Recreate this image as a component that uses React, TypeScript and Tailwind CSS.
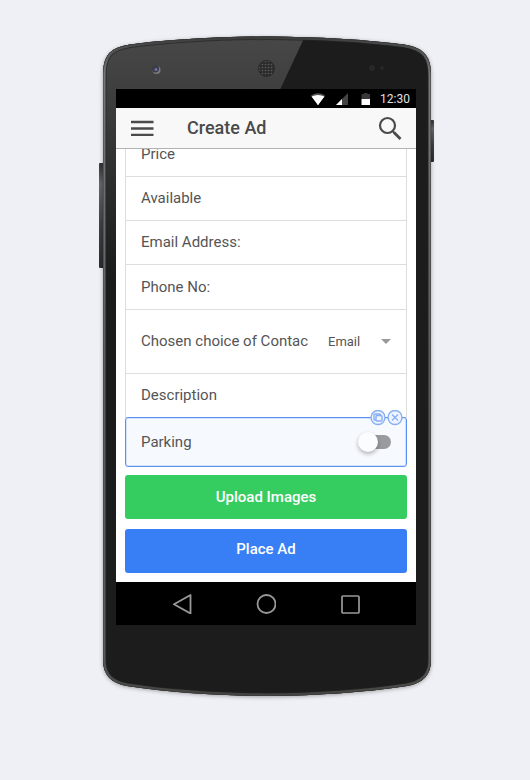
import { useState } from "react";

const fields = [
  { id: "price", label: "Price", type: "text", height: "h-11" },
  { id: "available", label: "Available", type: "text", height: "h-11" },
  { id: "email", label: "Email Address:", type: "email", height: "h-11" },
  { id: "phone", label: "Phone No:", type: "tel", height: "h-[45px]" },
];

function PhoneBody() {
  const outline =
    "M103 76 C103 56 109 48 130 44.500 Q190 37 267 36.500 Q344 37 404 44.500 C425 48 431 57 431 76 V660 C431 675 423 683 407 686 Q344 695.500 267 696 Q190 695.500 127 686 C111 683 103 675 103 660 Z";
  return (
    <svg
      aria-hidden="true"
      className="pointer-events-none absolute top-0 left-0 h-[670px] w-[340px]"
      viewBox="98 34 340 670"
    >
      <defs>
        <linearGradient id="shine" x1="0" y1="0" x2="0" y2="1">
          <stop offset="0" stopColor="#484848" />
          <stop offset="0.18" stopColor="#3c3c3c" />
          <stop offset="0.6" stopColor="#1b1b1b" />
        </linearGradient>
        <linearGradient id="rim" x1="0" y1="0" x2="0" y2="1">
          <stop offset="0" stopColor="#3c3c3c" />
          <stop offset="0.06" stopColor="#77787b" />
          <stop offset="0.5" stopColor="#5b5c5e" />
          <stop offset="0.94" stopColor="#58595b" />
          <stop offset="1" stopColor="#444340" />
        </linearGradient>
        <linearGradient id="key" x1="0" y1="0" x2="0" y2="1">
          <stop offset="0" stopColor="#333" />
          <stop offset="0.2" stopColor="#66676a" />
          <stop offset="0.6" stopColor="#3f4042" />
          <stop offset="1" stopColor="#2c2c2e" />
        </linearGradient>
        <filter id="shade" x="-10%" y="-10%" width="120%" height="120%">
          <feDropShadow dx="0" dy="1" stdDeviation="2" floodColor="#000" floodOpacity="0.35" />
        </filter>
        <clipPath id="body">
          <path d={outline} />
        </clipPath>
        <pattern id="mesh" width="3" height="3" patternUnits="userSpaceOnUse">
          <rect width="3" height="3" fill="#2c2c2c" />
          <circle cx="1.5" cy="1.5" r="0.8" fill="#5c5c5c" />
        </pattern>
      </defs>
      <rect x="99" y="163" width="5" height="105" rx="1" fill="url(#key)" />
      <rect x="430" y="120" width="4" height="42" rx="1" fill="url(#key)" />
      <path d={outline} fill="#1a1a1a" filter="url(#shade)" />
      <g clipPath="url(#body)">
        <path d="M98 34 H306 L278 94 L116 440 H98 Z" fill="url(#shine)" />
        <path d={outline} fill="none" stroke="#232323" strokeOpacity="0.7" strokeWidth="7" />
        <path d={outline} fill="none" stroke="url(#rim)" strokeWidth="5" />
        <path d={outline} fill="none" stroke="#3b3b3c" strokeWidth="1" />
      </g>
      <circle cx="156.500" cy="70" r="4" fill="#7c7d84" />
      <circle cx="155.500" cy="68.800" r="3.600" fill="#3c3c44" />
      <circle cx="156" cy="69.500" r="1.500" fill="#6f70b5" />
      <circle cx="266.500" cy="68.500" r="8" fill="url(#mesh)" stroke="#2a2a2a" />
      <circle cx="372" cy="68" r="3" fill="#282828" />
      <circle cx="382" cy="68" r="2" fill="#282828" />
    </svg>
  );
}

function StatusBar() {
  return (
    <div className="flex h-[19px] items-center justify-end bg-black pr-1.5 text-xs text-[#e0e0e0]">
      <svg aria-hidden="true" className="h-3 w-[70px]" viewBox="0 0 70 12">
        <path d="M5 2.500 Q12 -2 19 2.500 L12 12 Z" fill="#555" />
        <path d="M7 4.500 Q12 2 17 4.500 L12 12 Z" fill="#fff" />
        <path d="M5.500 3.500 Q12 0.500 18.500 3.500 L12 12 Z" fill="#fff" />
        <path d="M42 0 V12 H30 Z" fill="#444" />
        <path d="M36 6 V12 H30 Z" fill="#fff" />
        <path d="M55.500 1 H58 V0 H61.500 V1 H64 V6 H55.500 Z" fill="#383838" />
        <path d="M55.500 6 H64 V12 H55.500 Z" fill="#fff" />
      </svg>
      <span className="pl-1">12:30</span>
    </div>
  );
}

function Header() {
  return (
    <header className="flex h-[41px] items-center border-b border-[#b2b2b2] bg-[#f8f8f8] px-3.5 text-[#4a4a4a]">
      <button type="button" aria-label="Menu" className="flex w-[57px] items-center">
        <svg className="h-4 w-6" viewBox="0 0 24 16">
          <path d="M1 2 H23.500 M1 8.500 H23.500 M1 15 H23.500" fill="none" stroke="currentColor" strokeWidth="2.400" />
        </svg>
      </button>
      <h1 className="flex-1 text-lg font-medium">Create Ad</h1>
      <button type="button" aria-label="Search">
        <svg className="h-6 w-6" viewBox="0 0 24 24" fill="none" stroke="currentColor">
          <circle cx="9.500" cy="9.500" r="7.500" strokeWidth="2.200" />
          <path d="M14.500 15 L16.500 17" strokeWidth="2" />
          <path d="M16 16.500 L22.500 23" strokeWidth="2.800" />
        </svg>
      </button>
    </header>
  );
}

function AdForm() {
  const [parking, setParking] = useState(false);
  const row = "flex items-center border-b border-[#dddddd] px-[15px]";
  return (
    <form className="overflow-hidden bg-white px-[9px] pb-[9px] text-[15px] text-[#555555]">
      <div className="-mt-4 border-x border-[#dddddd]">
        {fields.map((f) => (
          <div key={f.id} className={`${row} ${f.height}`}>
            <label htmlFor={f.id} className="whitespace-nowrap">{f.label}</label>
            <input id={f.id} type={f.type} className="ml-2 min-w-0 flex-1 bg-transparent outline-none" />
          </div>
        ))}
        <div className={`${row} h-16 justify-between`}>
          <label htmlFor="contact" className="whitespace-nowrap">Chosen choice of Contac</label>
          <div className="relative flex items-center">
            <select id="contact" defaultValue="Email" className="w-[63px] appearance-none bg-transparent text-[13px] outline-none">
              <option>Email</option>
              <option>Phone</option>
            </select>
            <span className="pointer-events-none absolute right-0 border-x-5 border-t-5 border-x-transparent border-t-[#999999]" />
          </div>
        </div>
        <div className={`${row} h-11`}>
          <label htmlFor="description">Description</label>
          <input id="description" className="ml-2 min-w-0 flex-1 bg-transparent outline-none" />
        </div>
      </div>

      <div className="relative -mt-px flex h-[50px] items-center justify-between rounded-[3px] border border-[#5b91ef] bg-[#f6faff] px-[15px] shadow-[inset_0_0_0_1px_#d3e2fb]">
        <label htmlFor="parking">Parking</label>
        <label className="relative flex h-3.5 w-8 items-center rounded-full bg-[#999b9f]">
          <input
            id="parking"
            type="checkbox"
            role="switch"
            aria-label="Parking"
            checked={parking}
            onChange={(e) => setParking(e.target.checked)}
            className="peer absolute inset-0 cursor-pointer appearance-none"
          />
          <span className="pointer-events-none absolute -left-px size-5 rounded-full bg-[#fafcff] shadow-[0_2px_4px_rgba(0,0,0,0.3)] peer-checked:left-3.5" />
        </label>
        <div className="absolute -top-2 right-[3px] flex gap-px text-[#86aef3]">
          <button type="button" aria-label="Duplicate">
            <svg className="size-4" viewBox="0 0 16 16" fill="none" stroke="currentColor">
              <circle cx="8" cy="7.500" r="7" fill="#edf4ff" strokeWidth="1.400" />
              <rect x="4" y="4" width="6.500" height="6" rx="1" strokeWidth="1.400" />
              <rect x="6" y="5.500" width="6" height="5.500" rx="1" fill="#edf4ff" strokeWidth="1.400" />
            </svg>
          </button>
          <button type="button" aria-label="Remove">
            <svg className="size-4" viewBox="0 0 16 16" fill="none" stroke="currentColor">
              <circle cx="8" cy="7.500" r="7" fill="#edf4ff" strokeWidth="1.400" />
              <path d="M5 4.500 L11 10.500 M11 4.500 L5 10.500" strokeWidth="1.300" />
            </svg>
          </button>
        </div>
      </div>

      <div className="mt-2 flex flex-col gap-2.5 font-medium text-white">
        <button type="button" className="h-11 rounded-[3px] bg-[#35cd60]">
          Upload Images
        </button>
        <button type="button" className="h-11 rounded-[3px] bg-[#387ff6] pb-1">
          Place Ad
        </button>
      </div>
    </form>
  );
}

function NavBar() {
  return (
    <nav className="flex h-[43px] items-center justify-center gap-16 bg-black text-[#999]">
      <button type="button" aria-label="Back">
        <svg className="size-5" viewBox="0 0 20 20" fill="none" stroke="currentColor">
          <path d="M2 10.300 L18.500 1 V19.500 Z" strokeWidth="1.800" strokeLinejoin="round" />
        </svg>
      </button>
      <button type="button" aria-label="Home">
        <svg className="size-5" viewBox="0 0 20 20" fill="none" stroke="currentColor">
          <circle cx="10.500" cy="10" r="9" strokeWidth="1.800" />
        </svg>
      </button>
      <button type="button" aria-label="Recent apps">
        <svg className="size-5" viewBox="0 0 20 20" fill="none" stroke="currentColor">
          <rect x="2" y="2" width="17" height="17" rx="1" strokeWidth="1.700" />
        </svg>
      </button>
    </nav>
  );
}

export default function App() {
  return (
    <div className="flex min-h-screen justify-center bg-[#eff0f5] pt-[34px] pb-10 font-['Roboto',sans-serif]">
      <div className="relative w-[334px]">
        <PhoneBody />
        <main className="relative mt-[55px] mr-4 ml-[18px]">
          <StatusBar />
          <Header />
          <AdForm />
          <NavBar />
        </main>
      </div>
    </div>
  );
}
